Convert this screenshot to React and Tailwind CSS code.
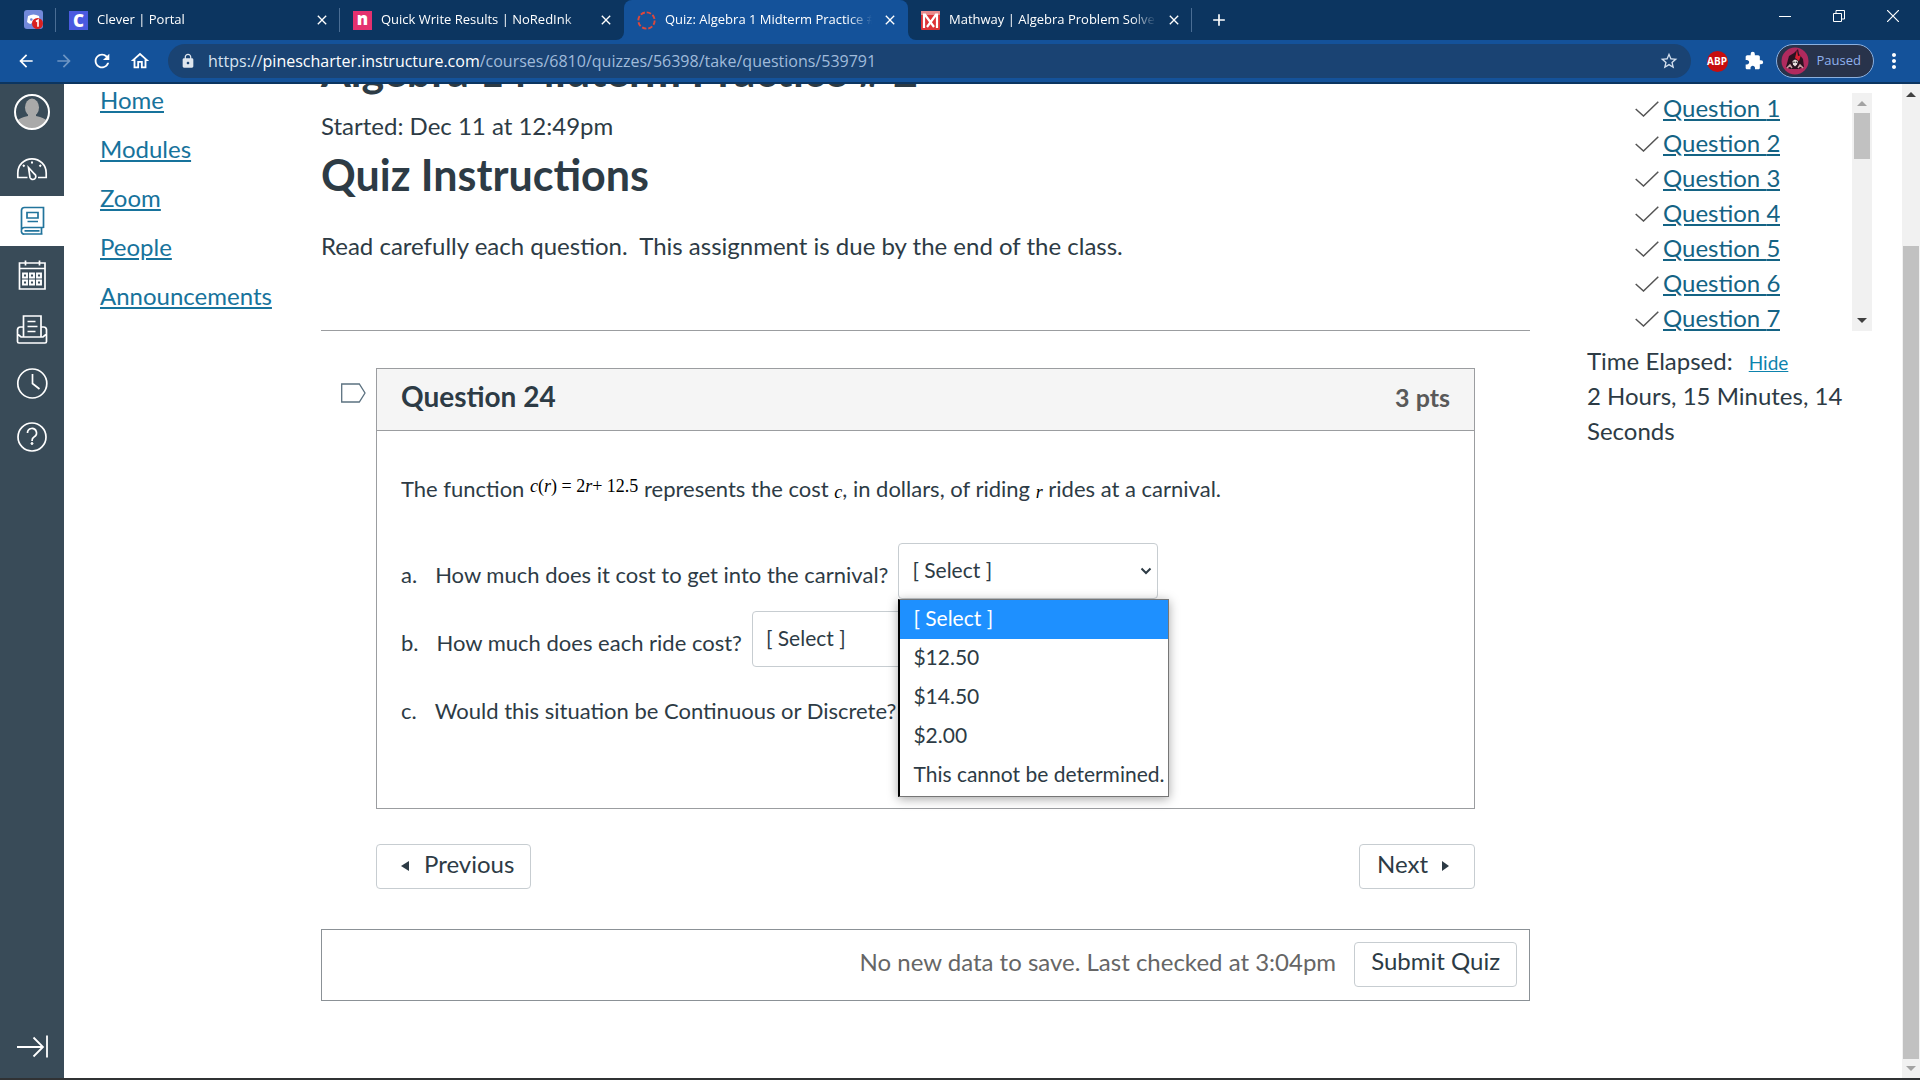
import React from "react";
import {
  MdArrowBack,
  MdArrowForward,
  MdRefresh,
  MdOutlineHome,
  MdLock,
  MdStarBorder,
  MdExtension,
  MdMoreVert,
  MdClose,
  MdAdd,
} from "react-icons/md";

/* ---------- Browser chrome ---------- */

function DiscordIcon() {
  return (
    <svg viewBox="0 0 19 19" className="size-[19px]" aria-hidden="true">
      <rect width="19" height="19" rx="3" fill="#7289da" />
      <path d="M4 6q5.500-3 11 0l1 6q-2 2-4 2l-1-1.500h-3L7 14q-2 0-4-2z" fill="#fff" />
      <circle cx="7.300" cy="9.500" r="1.300" fill="#7289da" />
      <circle cx="13.500" cy="13.500" r="5.500" fill="#d9201f" />
      <path d="M12 11.500l2-1.300v6.600" stroke="#fff" strokeWidth="1.600" fill="none" />
    </svg>
  );
}

function CanvasIcon() {
  return (
    <svg viewBox="0 0 20 20" className="size-[19px]" aria-hidden="true">
      <circle cx="10" cy="10" r="8.600" fill="none" stroke="#e0483a" strokeWidth="2" strokeDasharray="4.750 2" />
    </svg>
  );
}

function MathwayIcon() {
  return (
    <svg viewBox="0 0 19 19" className="size-[19px]" aria-hidden="true">
      <rect width="19" height="19" rx="1" fill="#dc3236" />
      <path d="M0 0h19v4H0z" fill="#e98a8c" />
      <path d="M3 2.500V17M16 2.500V17M3.500 3l9.500 13M15.500 3L6 16" stroke="#fff" strokeWidth="2.200" fill="none" />
    </svg>
  );
}

function LetterIcon({ letter, className }) {
  return (
    <span className={"flex size-[19px] shrink-0 items-center justify-center text-[17px] leading-none font-extrabold text-white " + className}>
      {letter}
    </span>
  );
}

function Tab({ icon, title, active, divider }) {
  return (
    <div
      className={
        "relative flex h-10 w-[284px] items-center pr-2.5 pb-2 pl-[13px] " +
        (active ? "rounded-t-lg bg-[#14529a]" : "")
      }
    >
      {active && (
        <>
          <span className="absolute bottom-0 -left-2 size-2 bg-[#14529a]"><span className="block size-2 rounded-br-lg bg-[#0c3560]" /></span>
          <span className="absolute -right-2 bottom-0 size-2 bg-[#14529a]"><span className="block size-2 rounded-bl-lg bg-[#0c3560]" /></span>
        </>
      )}
      <span className="mt-2 shrink-0">{icon}</span>
      <span className="mt-1.5 ml-[9px] min-w-0 flex-1 overflow-hidden text-[13px] leading-5 whitespace-nowrap text-white [mask-image:linear-gradient(to_right,black_calc(100%-24px),transparent)]">
        {title}
      </span>
      <button aria-label={"Close " + title} className="mt-2 ml-2.5 flex size-4 shrink-0 items-center justify-center text-white">
        <MdClose className="size-4" />
      </button>
      {divider && <span className="absolute top-2 right-0 h-6 w-px bg-[#4a6d94]" />}
    </div>
  );
}

function TabStrip() {
  return (
    <div className="flex h-10 justify-between bg-[#0c3560]">
      <div className="flex min-w-0">
        <div className="relative flex w-14 shrink-0 justify-center pt-[10px] pl-2.5">
          <DiscordIcon />
          <span className="absolute top-2 right-0 h-6 w-px bg-[#4a6d94]" />
        </div>
        <Tab icon={<LetterIcon letter="C" className="bg-[#4a5ae0]" />} title="Clever | Portal" divider />
        <Tab icon={<LetterIcon letter="n" className="bg-[#e4316f] pb-1 text-xl" />} title="Quick Write Results | NoRedInk" />
        <Tab icon={<CanvasIcon />} title="Quiz: Algebra 1 Midterm Practice # 2" active />
        <Tab icon={<MathwayIcon />} title="Mathway | Algebra Problem Solver" divider />
        <button aria-label="New tab" className="flex w-[54px] shrink-0 items-center justify-center text-white">
          <MdAdd className="size-5" />
        </button>
      </div>
      <div className="flex h-8 shrink-0 text-white">
        <button aria-label="Minimize" className="flex w-[54px] items-center justify-center">
          <svg viewBox="0 0 12 12" className="size-3" stroke="currentColor"><path d="M0 6.500h12" /></svg>
        </button>
        <button aria-label="Restore" className="flex w-[54px] items-center justify-center">
          <svg viewBox="0 0 12 12" className="size-3" stroke="currentColor" fill="none"><path d="M.5 3.500h8v8h-8zM3 3V.5h8.500v8.500H9" /></svg>
        </button>
        <button aria-label="Close window" className="flex w-[54px] items-center justify-center">
          <svg viewBox="0 0 12 12" className="size-3" stroke="currentColor" strokeWidth="1.200"><path d="M0 0l12 12M12 0L0 12" /></svg>
        </button>
      </div>
    </div>
  );
}

function Toolbar() {
  return (
    <div className="flex h-11 items-center border-b-2 border-[#0c3560] bg-[#14529a] pl-[7px] text-white">
      <button aria-label="Back" className="flex w-[38px] justify-center"><MdArrowBack className="size-5" /></button>
      <button aria-label="Forward" className="flex w-[38px] justify-center text-[#6d95c4]"><MdArrowForward className="size-5" /></button>
      <button aria-label="Reload" className="flex w-[38px] justify-center"><MdRefresh className="size-[22px]" /></button>
      <button aria-label="Home" className="flex w-[38px] justify-center"><MdOutlineHome className="size-[22px]" /></button>
      <div className="ml-[9px] flex h-[34px] min-w-0 flex-1 items-center rounded-full bg-[#1a4373] px-3">
        <MdLock className="size-4 shrink-0 text-[#dfe6ee]" />
        <p className="ml-3 min-w-0 flex-1 truncate text-[16px] leading-6 text-[#a0bbdb]">
          <span className="text-[#d6e2f0]">https://</span>
          <span className="text-white">pinescharter.instructure.com</span>
          /courses/6810/quizzes/56398/take/questions/539791
        </p>
        <button aria-label="Bookmark this page"><MdStarBorder className="size-5 text-[#d3dfee]" /></button>
      </div>
      <button aria-label="Adblock Plus" className="ml-4 flex size-[21px] items-center justify-center rounded-full bg-[#c70d0e] text-[10px] font-bold">ABP</button>
      <button aria-label="Extensions" className="ml-4"><MdExtension className="size-5" /></button>
      <button className="ml-3 flex h-[34px] items-center rounded-full border border-[#8ab0e0] bg-[#28334b] pr-3 pl-1 text-[13px] text-[#8fb1ee]">
        <svg viewBox="0 0 28 28" className="size-7" aria-hidden="true">
          <circle cx="14" cy="14" r="13.500" fill="#b02a5e" />
          <path d="M5 20L8 9l5-3 4-4 1 5 4 5 1 8-5 2H9z" fill="#2a1320" />
          <path d="M16 3l1 6 3-1-2 6-4-3z" fill="#d81f33" />
          <path d="M11.500 14l2.500-1.500 3 1.500-1 3.500-2 2-2-2z" fill="#e9dfe0" />
          <circle cx="13" cy="15.300" r=".8" fill="#222" /><circle cx="15.400" cy="15.300" r=".8" fill="#222" />
          <path d="M6 21l3-3 2 3M17 21l2-3 3 3" stroke="#c9a0a5" strokeWidth="1.500" fill="none" />
        </svg>
        <span className="ml-2">Paused</span>
      </button>
      <button aria-label="Menu" className="mr-3.5 ml-2"><MdMoreVert className="size-6" /></button>
    </div>
  );
}

/* ---------- Global navigation ---------- */

function NavItem({ label, active, children }) {
  return (
    <a
      href="#"
      aria-label={label}
      className={
        "flex h-[50px] w-full items-center justify-center " +
        (active ? "bg-white text-[#22749c]" : "text-white")
      }
    >
      <svg viewBox="0 0 32 32" className="size-8" fill="none" stroke="currentColor" strokeWidth="1.700" aria-hidden="true">
        {children}
      </svg>
    </a>
  );
}

function GlobalNav() {
  return (
    <nav className="flex w-16 shrink-0 flex-col gap-1 bg-[#394b58]">
      <a href="#" aria-label="Account" className="flex h-[54px] items-center justify-center pt-0.5">
        <svg viewBox="0 0 36 36" className="size-9" aria-hidden="true">
          <defs><clipPath id="avatar"><circle cx="18" cy="18" r="17" /></clipPath></defs>
          <g clipPath="url(#avatar)" fill="#a9a9a9">
            <ellipse cx="18" cy="13.500" rx="7" ry="9" />
            <path d="M3 36V27q2-3 11-5v-4h8v4q9 2 11 5v9z" />
          </g>
          <circle cx="18" cy="18" r="17" fill="none" stroke="#fff" strokeWidth="2" />
        </svg>
      </a>
      <NavItem label="Dashboard">
        <path d="M11.500 26.500H1.800V22a14.200 14.200 0 0 1 28.400 0v4.500H22" />
        <path d="M12.500 16.500l6 6.500a3 3 0 1 1-4.500 3.500z" />
        <path d="M16 10.500v2M7 14l1.500 1.500M25 14l-1.500 1.500" strokeWidth="2" />
      </NavItem>
      <NavItem label="Courses" active>
        <path d="M27.500 23V2.500H8.500A3 3 0 0 0 5.500 5.500v20A2.700 2.700 0 0 0 8.500 29h18M27.500 22.500H8.500a3 3 0 0 0-3 3.500M25.500 22.500V29M8.500 25.800h15" />
        <path d="M11 7.500h11v5.500h-11zM11.500 16.500h10.500" />
      </NavItem>
      <NavItem label="Calendar">
        <path d="M3.500 4h25.500v26h-25.500zM3.500 9.500h25.500M9.500 1.500v5M23.500 1.500v5" />
        <path d="M7 14.500h4v4H7zM14 14.500h4v4h-4zM21 14.500h4v4h-4zM7 21.500h4v4H7zM14 21.500h4v4h-4zM21 21.500h4v4h-4z" strokeWidth="1.900" />
      </NavItem>
      <NavItem label="Inbox">
        <path d="M7.500 23.500V3h17.500v20.500M7 14H4.500a3 3 0 0 0-3 2.500v12a1.500 1.500 0 0 0 1.500 1.500h26a1.500 1.500 0 0 0 1.500-1.500v-12a3 3 0 0 0-3-2.500H25.500M1.500 21l3.500 3h22l3.500-3" />
        <path d="M11.500 8.500h8M11.500 13.500h10M11.500 18.500h8" />
      </NavItem>
      <NavItem label="History">
        <circle cx="16.300" cy="16.500" r="14.500" />
        <path d="M16.500 7v9.500l7 5.500" />
      </NavItem>
      <NavItem label="Help">
        <circle cx="16" cy="16" r="14" />
        <path d="M11.500 12a4.500 4.500 0 1 1 6.500 4q-2 1-2 4" />
        <circle cx="16" cy="22.500" r="1" fill="currentColor" strokeWidth="1" />
      </NavItem>
      <button aria-label="Expand global navigation" className="mt-auto flex h-16 items-center justify-center text-white">
        <svg viewBox="0 0 32 24" className="h-6 w-8" fill="none" stroke="currentColor" strokeWidth="1.800">
          <path d="M1 13h26M17.500 3.500l9.500 9.500-9.500 9.500M31 1.500v22" />
        </svg>
      </button>
    </nav>
  );
}

function CourseNav() {
  return (
    <nav className="w-[257px] shrink-0 pl-9">
      <ul className="flex flex-col gap-[17px] text-2xl leading-8">
        {["Home", "Modules", "Zoom", "People", "Announcements"].map((name) => (
          <li key={name}>
            <a href="#" className="text-[#17739c] underline">{name}</a>
          </li>
        ))}
      </ul>
    </nav>
  );
}

/* ---------- Quiz ---------- */

function SelectBox({ id, children }) {
  return (
    <div className="relative ml-2.5 w-[260px]">
      <select
        id={id}
        className="h-14 w-full appearance-none rounded border border-[#c7cdd1] bg-white pb-[3px] pl-[13px] text-[21px] text-[#2d3b45]"
      >
        <option>[ Select ]</option>
        <option>$12.50</option>
        <option>$14.50</option>
        <option>$2.00</option>
        <option>This cannot be determined.</option>
      </select>
      <svg viewBox="0 0 12 8" className="pointer-events-none absolute top-6 right-1.5 h-2 w-3" fill="none" stroke="#2d3b45" strokeWidth="2" aria-hidden="true">
        <path d="M1.500 1.500L6 6l4.500-4.500" />
      </svg>
      {children}
    </div>
  );
}

function OptionList() {
  return (
    <ul
      role="listbox"
      className="absolute top-full left-0 z-10 w-[271px] border border-l-2 border-[#767676] border-l-black bg-white pb-px text-[21px] leading-[36px] whitespace-nowrap text-[#2d3b45] shadow-[0_2px_10px_rgba(0,0,0,0.35)]"
    >
      <li role="option" aria-selected="true" className="bg-[#1e90ff] pb-[3px] pl-[13px] text-white">[ Select ]</li>
      {["$12.50", "$14.50", "$2.00", "This cannot be determined."].map((text) => (
        <li key={text} role="option" aria-selected="false" className="pb-[3px] pl-[13px]">{text}</li>
      ))}
    </ul>
  );
}

function Row({ id, letter, text, children }) {
  return (
    <div className="flex h-14 items-center">
      <label htmlFor={id} className="flex gap-[18px] pt-2 whitespace-nowrap">
        <span>{letter}.</span>
        <span>{text}</span>
      </label>
      <SelectBox id={id}>{children}</SelectBox>
    </div>
  );
}

function Question() {
  return (
    <div className="flex pr-[55px] pl-5">
      <div className="w-[35px] shrink-0 pt-[15px]">
        <button aria-label="Flag question" className="block">
          <svg viewBox="0 0 25 20" className="h-5 w-[25px]" fill="#fff" stroke="#5b7180" strokeWidth="1.300">
            <path d="M.7 1h17.600l5.700 9-5.700 9H.7z" />
          </svg>
        </button>
      </div>
      <section className="flex-1 border border-[#9b9da0]">
        <header className="flex items-baseline justify-between border-b border-[#9b9da0] bg-[#f5f5f5] px-6 pt-[11px] pb-[17px] leading-8">
          <h2 className="text-[28px] font-bold">Question 24</h2>
          <span className="text-[25px] font-bold text-[#595959]">3 pts</span>
        </header>
        <div className="px-6 pt-[42px] pb-[73px] text-[22px] leading-8">
          <p>
            The function{" "}
            <span className="align-[5px] font-['Liberation_Serif',serif] text-lg leading-none text-black">
              <i>c</i>(<i>r</i>) = 2<i>r</i>+ 12.5
            </span>{" "}
            represents the cost{" "}
            <i className="align-[-1px] font-['Liberation_Serif',serif] text-lg leading-none text-black">c</i>, in dollars, of riding{" "}
            <i className="align-[-1px] font-['Liberation_Serif',serif] text-lg leading-none text-black">r</i> rides at a carnival.
          </p>
          <div className="mt-[38px] flex flex-col gap-3">
            <Row id="answer-a" letter="a" text="How much does it cost to get into the carnival?">
              <OptionList />
            </Row>
            <Row id="answer-b" letter="b" text="How much does each ride cost?" />
            <Row id="answer-c" letter="c" text="Would this situation be Continuous or Discrete?" />
          </div>
        </div>
      </section>
    </div>
  );
}

function Triangle({ left }) {
  return (
    <svg viewBox="0 0 8 10" className="mt-1 h-2.5 w-2" fill="currentColor" aria-hidden="true">
      {left ? <path d="M8 0v10L0 5z" /> : <path d="M0 0v10l7-5z" />}
    </svg>
  );
}

const buttonBase = "flex h-[45px] items-center rounded border border-[#c7cdd1] bg-white pb-1.5 text-2xl";

function Main() {
  return (
    <main className="min-w-0 flex-1">
      <h1 className="-mt-[37px] text-[43px] leading-[48px] font-bold">Algebra 1 Midterm Practice # 2</h1>
      <p className="mt-[15px] text-2xl leading-8">Started: Dec 11 at 12:49pm</p>
      <h1 className="mt-[9px] text-[43px] leading-[48px] font-bold">Quiz Instructions</h1>
      <p className="mt-[31px] text-2xl leading-8">Read carefully each question.&nbsp; This assignment is due by the end of the class.</p>
      <hr className="mt-[68px] mb-[37px] border-[#9b9da0]" />
      <Question />
      <div className="mt-[35px] flex justify-between px-[55px]">
        <button className={buttonBase + " gap-[15px] pr-4 pl-6"}><Triangle left />Previous</button>
        <button className={buttonBase + " gap-3.5 pr-6 pl-[17px]"}>Next<Triangle /></button>
      </div>
      <div className="mt-10 flex h-[72px] items-center justify-end gap-[18px] border border-[#8b9196] pr-3 pb-0.5">
        <span className="pb-1 text-2xl text-[#666]">No new data to save. Last checked at 3:04pm</span>
        <button className={buttonBase + " px-4"}>Submit Quiz</button>
      </div>
    </main>
  );
}

/* ---------- Right side and scroll bars ---------- */

function ScrollArrow({ down, className }) {
  return (
    <svg viewBox="0 0 10 5" className={"h-[5px] w-2.5 shrink-0 " + className} fill="currentColor" aria-hidden="true">
      {down ? <path d="M0 0h10L5 5z" /> : <path d="M0 5h10L5 0z" />}
    </svg>
  );
}

function Aside() {
  return (
    <aside className="w-[372px] shrink-0 pt-[9px] pr-[30px] pl-[57px] text-2xl leading-[35px]">
      <div className="flex h-[238px] justify-between">
        <ul className="-mt-[3px] h-[241px] overflow-hidden pl-12">
          {[1, 2, 3, 4, 5, 6, 7].map((n) => (
            <li key={n} className="flex items-center gap-1">
              <svg viewBox="0 0 24 16" className="mt-0.5 h-4 w-6" fill="none" stroke="#555" strokeWidth="1.500" aria-hidden="true">
                <path d="M.7 8l7.800 7L23.300.7" />
              </svg>
              <a href="#" className="text-[#146384] underline">Question {n}</a>
            </li>
          ))}
        </ul>
        <div className="flex w-5 flex-col items-center bg-[#f1f1f1] py-2">
          <ScrollArrow className="text-[#a3a3a3]" />
          <div className="mt-[7px] h-[46px] w-4 bg-[#c1c1c1]" />
          <ScrollArrow down className="mt-auto text-[#404040]" />
        </div>
      </div>
      <div className="mt-3 flex items-baseline gap-4">
        <span>Time Elapsed:</span>
        <a href="#" className="text-[19px] leading-none text-[#0d83ad] underline">Hide</a>
      </div>
      <p className="pr-5">2 Hours, 15 Minutes, 14 Seconds</p>
    </aside>
  );
}

export default function App() {
  return (
    <div className="flex h-screen flex-col overflow-hidden bg-white font-['Lato',sans-serif] text-[#2d3b45]">
      <div className="shrink-0 font-['Open_Sans',sans-serif]">
        <TabStrip />
        <Toolbar />
      </div>
      <div className="flex min-h-0 flex-1 overflow-hidden">
        <GlobalNav />
        <CourseNav />
        <Main />
        <Aside />
        <div className="flex w-[18px] shrink-0 flex-col items-center bg-[#f1f1f1] pt-2 pb-[7px]">
          <ScrollArrow className="text-[#404040]" />
          <div className="mt-auto mb-[7px] h-[83%] w-4 bg-[#c1c1c1]" />
          <ScrollArrow down className="text-[#a3a3a3]" />
        </div>
      </div>
      <div className="h-0.5 shrink-0 bg-[#303234]" />
    </div>
  );
}
